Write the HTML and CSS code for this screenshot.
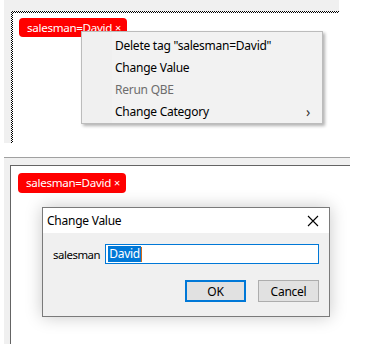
FILE: index.html
```html
<!DOCTYPE html>
<html lang="en">
<head>
    <meta charset="UTF-8">
    <meta name="viewport" content="width=device-width, initial-scale=1.0">
    <title>Tag editor</title>
    <link rel="stylesheet" href="styles.css">
</head>
<body>
    <div class="panel top-panel">
        <div class="frame dotted">
            <span class="tag">salesman=David <span class="tag-x">&times;</span></span>
        </div>
    </div>

    <div class="menu">
        <div class="menu-item">Delete tag "salesman=David"</div>
        <div class="menu-item">Change Value</div>
        <div class="menu-item disabled">Rerun QBE</div>
        <div class="menu-item">Change Category <span class="chevron">&#8250;</span></div>
    </div>

    <div class="panel bottom-panel">
        <div class="frame solid">
            <span class="tag">salesman=David <span class="tag-x">&times;</span></span>
        </div>
    </div>

    <div class="dialog">
        <div class="dialog-title">
            <span>Change Value</span>
            <svg class="close" width="12" height="12" viewBox="0 0 12 12">
                <path d="M1 1 L11 11 M11 1 L1 11" stroke="#000" stroke-width="1.1" fill="none"/>
            </svg>
        </div>
        <div class="dialog-body">
            <div class="field">
                <label>salesman</label>
                <div class="input"><span class="selected">David</span><span class="caret"></span></div>
            </div>
            <div class="actions">
                <button class="btn default">OK</button>
                <button class="btn">Cancel</button>
            </div>
        </div>
    </div>
</body>
</html>
```

FILE: styles.css
```css
body {
    margin: 0;
    width: 372px;
    height: 350px;
    background: #fff;
    font-family: "Noto Sans", "Open Sans", sans-serif;
    font-size: 12px;
    letter-spacing: -0.25px;
    color: #000;
    position: relative;
    overflow: hidden;
}

.panel {
    background: #f0f0f0;
    margin-left: 4px;
    overflow: hidden;
    box-sizing: border-box;
}

.top-panel {
    width: 335px;
    height: 143px;
    padding: 11px 0 0 7px;
}

.bottom-panel {
    width: 346px;
    height: 187px;
    margin-top: 14px;
    border-top: 1px solid #a0a0a0;
    padding: 7px 0 0 6px;
}

.frame {
    background: #fff;
    width: 400px;
    height: 300px;
}

/* focus rectangle: 1px checkerboard, two pixels thick */
.frame.dotted {
    border: 2px solid transparent;
    background:
        linear-gradient(#fff, #fff) padding-box,
        repeating-conic-gradient(#000 0 25%, #fff 0 50%) 0 0 / 2px 2px border-box;
    padding: 5px 0 0 6px;
}

.frame.solid {
    border: 1px solid #646464;
    padding: 7px 0 0 7px;
}

.tag {
    display: inline-flex;
    align-items: center;
    height: 20px;
    padding: 0 6px 0 8px;
    background: #ff0000;
    color: #fff;
    border-radius: 4px;
    line-height: 20px;
    font-size: 11.6px;
    letter-spacing: -0.3px;
}

.dotted .tag {
    height: 19px;
}

.tag-x {
    margin-left: 3px;
    font-size: 11px;
}

.menu {
    position: absolute;
    left: 81px;
    top: 31px;
    width: 242px;
    height: 93px;
    box-sizing: border-box;
    padding: 3px 0;
    background: linear-gradient(to right, #f0f0f0 30px, #f2f2f2 30px);
    border: 1px solid #bcbcbc;
    box-shadow: 2px 2px 3px rgba(0, 0, 0, 0.3);
}

.menu-item {
    height: 22px;
    line-height: 22px;
    padding-left: 33px;
    display: flex;
    align-items: center;
}

.menu-item.disabled {
    color: #6d6d6d;
}

.chevron {
    margin-left: auto;
    margin-right: 12px;
    font-size: 14px;
    color: #333;
}

.dialog {
    position: absolute;
    left: 42px;
    top: 207px;
    width: 288px;
    height: 110px;
    box-sizing: border-box;
    border: 1px solid #7a7a7a;
    background: #f0f0f0;
    box-shadow: 0 0 16px rgba(0, 0, 0, 0.22);
    display: flex;
    flex-direction: column;
}

.dialog-title {
    height: 25px;
    background: #fff;
    display: flex;
    align-items: center;
    justify-content: space-between;
    padding: 0 10px 0 4px;
}

.close {
    display: block;
}

.dialog-body {
    padding: 11px 10px 0 10px;
}

.field {
    display: flex;
    align-items: center;
    gap: 5px;
}

.field label {
    font-size: 11.4px;
    letter-spacing: -0.45px;
}

.input {
    width: 216px;
    height: 20px;
    box-sizing: border-box;
    border: 1px solid #0078d7;
    background: #fff;
    display: flex;
    align-items: center;
    padding-left: 2px;
}

.selected {
    background: #0078d7;
    color: #fff;
    line-height: 16px;
    padding: 0 1px;
}

.caret {
    width: 1px;
    height: 15px;
    background: #d06a1a;
}

.actions {
    display: flex;
    justify-content: flex-end;
    gap: 12px;
    margin-top: 16px;
}

.btn {
    width: 61px;
    height: 22px;
    box-sizing: border-box;
    border: 1px solid #adadad;
    background: #e1e1e1;
    font-family: inherit;
    font-size: 12px;
    letter-spacing: -0.25px;
    padding: 0;
}

.btn.default {
    border: 2px solid #0078d7;
}
```
